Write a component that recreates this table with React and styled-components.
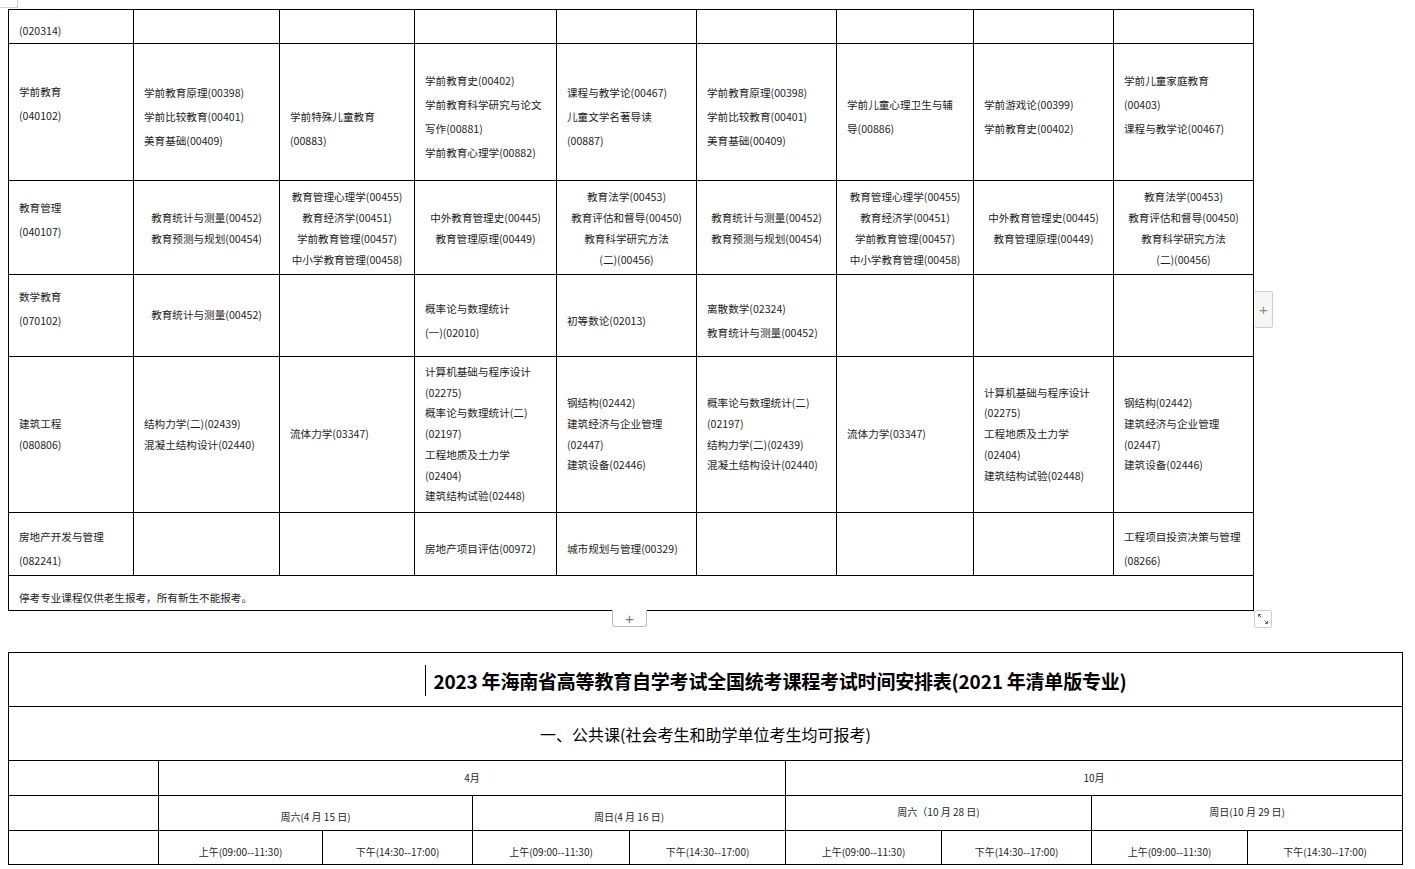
import React from 'react';
import styled, { createGlobalStyle } from 'styled-components';

const GlobalStyle = createGlobalStyle`
  html, body {
    margin: 0;
    padding: 0;
    background: #fff;
  }
  body {
    font-family: "Noto Sans CJK SC", "Liberation Sans", sans-serif;
    color: #1e1e1e;
  }
`;

const Page = styled.div`
  position: relative;
  padding: 9px 0 0 8px;
  width: 1415px;
  height: 869px;
  box-sizing: border-box;
  overflow: hidden;
`;

const MoveHandle = styled.div`
  position: absolute;
  left: 0;
  top: 0;
  width: 18px;
  height: 8px;
  border-right: 1px solid #d0d0d0;
  border-bottom: 1px solid #d0d0d0;
  box-sizing: border-box;
`;

const TableWrap = styled.div`
  position: relative;
  width: 1245px;
`;

const Grid = styled.table`
  border-collapse: collapse;
  table-layout: fixed;
  width: ${p => p.$width}px;
  font-size: ${p => p.$size || 10.6}px;
`;

const Row = styled.tr`
  height: ${p => p.$h}px;
`;

const Cell = styled.td`
  border: 1px solid #000;
  padding: ${p => p.$pt || 0}px 10px ${p => p.$pb || 0}px 10px;
  text-align: ${p => p.$align || 'left'};
  vertical-align: middle;
  line-height: ${p => p.$lh || 24}px;
  box-sizing: border-box;
`;

const Line = styled.div`
  white-space: nowrap;
`;

const SideAdd = styled.div`
  position: absolute;
  left: 1247px;
  top: 282px;
  width: 17px;
  height: 35px;
  border: 1px solid #cfcfcf;
  border-left: none;
  border-radius: 0 2px 2px 0;
  background: #f6f6f6;
  color: #8a8a8a;
  display: flex;
  align-items: center;
  justify-content: center;
  font-family: "Liberation Sans", sans-serif;
  font-size: 15px;
`;

const BottomAdd = styled.div`
  position: absolute;
  left: 604px;
  top: 601px;
  width: 35px;
  height: 17px;
  border: 1px solid #bdbdbd;
  border-top: none;
  border-radius: 0 0 3px 3px;
  background: #fff;
  color: #777;
  display: flex;
  align-items: center;
  justify-content: center;
  font-family: "Liberation Sans", sans-serif;
  font-size: 15px;
  box-sizing: border-box;
`;

const ResizeHandle = styled.div`
  position: absolute;
  left: 1246px;
  top: 601px;
  width: 18px;
  height: 18px;
  border: 1px solid #cfcfcf;
  border-radius: 2px;
  background: #fff;
  box-sizing: border-box;
  display: flex;
  align-items: center;
  justify-content: center;
`;

const SecondTable = styled(Grid)`
  margin-top: 41px;
`;

const TitleCell = styled(Cell)`
  padding: 0 0 0 141px;
  text-align: center;
  font-size: 19px;
  font-weight: 700;
  color: #000;
  line-height: 30px;
`;

const Caret = styled.span`
  display: inline-block;
  width: 1px;
  height: 31px;
  background: #000;
  margin-right: 7px;
  vertical-align: middle;
`;

const TitleText = styled.span`
  vertical-align: middle;
  letter-spacing: -0.2px;
`;

const SectionCell = styled(Cell)`
  text-align: center;
  font-size: 16px;
  color: #000;
`;

const HeadCell = styled(Cell)`
  text-align: center;
  font-size: 10px;
  padding: ${p => p.$pt || 0}px 0 ${p => p.$pb || 0}px;
`;

const c = (lines, opts = {}) => ({ lines, ...opts });

const rows = [
  {
    h: 33,
    cells: [c(['(020314)'], { pt: 9 }), ...Array(8).fill(c([]))],
  },
  {
    h: 137,
    cells: [
      c(['学前教育', '(040102)'], { pb: 17 }),
      c(['学前教育原理(00398)', '学前比较教育(00401)', '美育基础(00409)'], { pt: 9 }),
      c(['学前特殊儿童教育', '(00883)'], { pt: 33 }),
      c(['学前教育史(00402)', '学前教育科学研究与论文', '写作(00881)', '学前教育心理学(00882)'], { pt: 9 }),
      c(['课程与教学论(00467)', '儿童文学名著导读', '(00887)'], { pt: 9 }),
      c(['学前教育原理(00398)', '学前比较教育(00401)', '美育基础(00409)'], { pt: 9 }),
      c(['学前儿童心理卫生与辅', '导(00886)'], { pt: 9 }),
      c(['学前游戏论(00399)', '学前教育史(00402)'], { pt: 9 }),
      c(['学前儿童家庭教育', '(00403)', '课程与教学论(00467)'], { pb: 15 }),
    ],
  },
  {
    h: 94,
    cells: [
      c(['教育管理', '(040107)'], { pb: 16 }),
      c(['教育统计与测量(00452)', '教育预测与规划(00454)'], { align: 'center', lh: 21 }),
      c(['教育管理心理学(00455)', '教育经济学(00451)', '学前教育管理(00457)', '中小学教育管理(00458)'], { align: 'center', lh: 21 }),
      c(['中外教育管理史(00445)', '教育管理原理(00449)'], { align: 'center', lh: 21 }),
      c(['教育法学(00453)', '教育评估和督导(00450)', '教育科学研究方法', '(二)(00456)'], { align: 'center', lh: 21 }),
      c(['教育统计与测量(00452)', '教育预测与规划(00454)'], { align: 'center', lh: 21 }),
      c(['教育管理心理学(00455)', '教育经济学(00451)', '学前教育管理(00457)', '中小学教育管理(00458)'], { align: 'center', lh: 21 }),
      c(['中外教育管理史(00445)', '教育管理原理(00449)'], { align: 'center', lh: 21 }),
      c(['教育法学(00453)', '教育评估和督导(00450)', '教育科学研究方法', '(二)(00456)'], { align: 'center', lh: 21 }),
    ],
  },
  {
    h: 82,
    cells: [
      c(['数学教育', '(070102)'], { pb: 14 }),
      c(['教育统计与测量(00452)'], { align: 'center', pb: 2 }),
      c([]),
      c(['概率论与数理统计', '(一)(02010)'], { pt: 10 }),
      c(['初等数论(02013)'], { pt: 10 }),
      c(['离散数学(02324)', '教育统计与测量(00452)'], { pt: 10 }),
      c([]),
      c([]),
      c([]),
    ],
  },
  {
    h: 156,
    cells: [
      c(['建筑工程', '(080806)'], { lh: 20.5 }),
      c(['结构力学(二)(02439)', '混凝土结构设计(02440)'], { lh: 20.5 }),
      c(['流体力学(03347)'], { lh: 20.5 }),
      c(['计算机基础与程序设计', '(02275)', '概率论与数理统计(二)', '(02197)', '工程地质及土力学', '(02404)', '建筑结构试验(02448)'], { lh: 20.8 }),
      c(['钢结构(02442)', '建筑经济与企业管理', '(02447)', '建筑设备(02446)'], { lh: 20.8 }),
      c(['概率论与数理统计(二)', '(02197)', '结构力学(二)(02439)', '混凝土结构设计(02440)'], { lh: 20.8 }),
      c(['流体力学(03347)'], { lh: 20.8 }),
      c(['计算机基础与程序设计', '(02275)', '工程地质及土力学', '(02404)', '建筑结构试验(02448)'], { lh: 20.8 }),
      c(['钢结构(02442)', '建筑经济与企业管理', '(02447)', '建筑设备(02446)'], { lh: 20.8 }),
    ],
  },
  {
    h: 63,
    cells: [
      c(['房地产开发与管理', '(082241)'], { pt: 9 }),
      c([]),
      c([]),
      c(['房地产项目评估(00972)'], { pt: 9 }),
      c(['城市规划与管理(00329)'], { pt: 9 }),
      c([]),
      c([]),
      c([]),
      c(['工程项目投资决策与管理', '(08266)'], { pt: 9 }),
    ],
  },
];

const firstCols = [125, 146, 135, 142, 140, 140, 137, 140, 140];
const secondCols = [150, 164, 150, 157, 156, 156, 150, 156, 155];

const days = [
  { label: '周六(4 月 15 日)', pt: 7 },
  { label: '周日(4 月 16 日)', pt: 7 },
  { label: '周六（10 月 28 日)', pb: 3 },
  { label: '周日(10 月 29 日)', pb: 3 },
];

const renderLines = (lines) =>
  lines.map((l, i) => <Line key={i}>{l}</Line>);

const App = () => {
  return (
    <>
      <GlobalStyle />
      <Page>
        <MoveHandle />
        <TableWrap>
          <Grid $width={1245}>
            <colgroup>
              {firstCols.map((w, i) => <col key={i} style={{ width: w }} />)}
            </colgroup>
            <tbody>
              {rows.map((row, ri) => (
                <Row key={ri} $h={row.h}>
                  {row.cells.map((cell, ci) => (
                    <Cell
                      key={ci}
                      $align={cell.align}
                      $pt={cell.pt}
                      $pb={cell.pb}
                      $lh={cell.lh}
                    >
                      {renderLines(cell.lines)}
                    </Cell>
                  ))}
                </Row>
              ))}
              <Row $h={35}>
                <Cell colSpan={9} $pt={9}>
                  停考专业课程仅供老生报考，所有新生不能报考。
                </Cell>
              </Row>
            </tbody>
          </Grid>
          <SideAdd>+</SideAdd>
          <BottomAdd>+</BottomAdd>
          <ResizeHandle>
            <svg width="12" height="12" viewBox="0 0 12 12" fill="none" stroke="#666" strokeWidth="1">
              <path d="M1.5 1.5 L4.5 4.5 M1.5 1.5 L1.5 4 M1.5 1.5 L4 1.5" />
              <path d="M10.5 10.5 L7.5 7.5 M10.5 10.5 L10.5 8 M10.5 10.5 L8 10.5" />
            </svg>
          </ResizeHandle>
        </TableWrap>

        <SecondTable $width={1394} $size={10}>
          <colgroup>
            {secondCols.map((w, i) => <col key={i} style={{ width: w }} />)}
          </colgroup>
          <tbody>
            <Row $h={54}>
              <TitleCell colSpan={9}>
                <Caret />
                <TitleText>2023 年海南省高等教育自学考试全国统考课程考试时间安排表(2021 年清单版专业)</TitleText>
              </TitleCell>
            </Row>
            <Row $h={54}>
              <SectionCell colSpan={9}>一、公共课(社会考生和助学单位考生均可报考)</SectionCell>
            </Row>
            <Row $h={35}>
              <HeadCell />
              <HeadCell colSpan={4}>4月</HeadCell>
              <HeadCell colSpan={4}>10月</HeadCell>
            </Row>
            <Row $h={35}>
              <HeadCell />
              {days.map(d => (
                <HeadCell key={d.label} colSpan={2} $pt={d.pt} $pb={d.pb}>{d.label}</HeadCell>
              ))}
            </Row>
            <Row $h={34}>
              <HeadCell />
              {[0, 1, 2, 3].map(i => (
                <React.Fragment key={i}>
                  <HeadCell $pt={8}>上午(09:00--11:30)</HeadCell>
                  <HeadCell $pt={8}>下午(14:30--17:00)</HeadCell>
                </React.Fragment>
              ))}
            </Row>
          </tbody>
        </SecondTable>
      </Page>
    </>
  );
};

export default App;
